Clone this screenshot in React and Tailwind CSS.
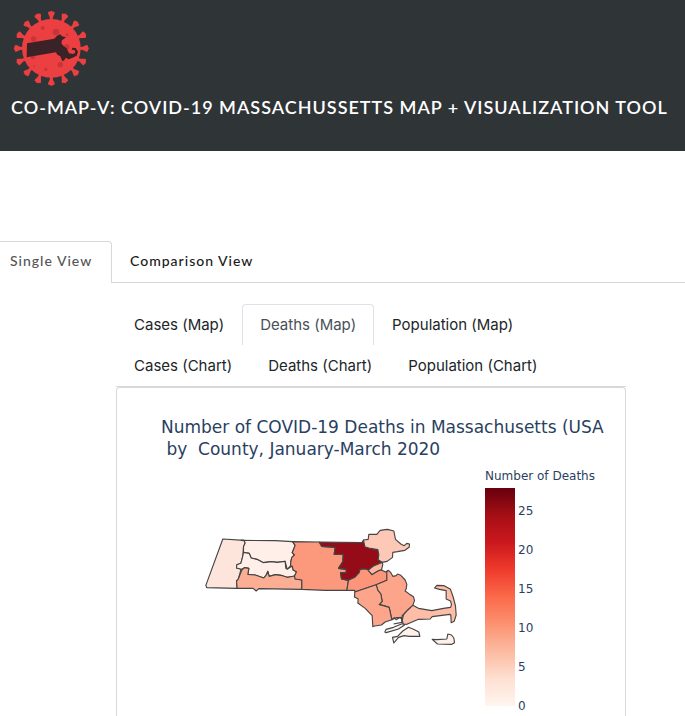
const spikeAngles = Array.from({ length: 16 }, (_, i) => i * 22.5);

function VirusLogo() {
  return (
    <svg viewBox="36 30 234 234" className="size-[78px]" role="img" aria-label="CO-MAP-V logo">
      <g fill="#ec3f41">
        {spikeAngles.map((angle) => (
          <path
            key={angle}
            transform={`rotate(${angle} 154 145)`}
            d="M150 60 L149 51 L144 40 Q143 34 149 35 L154 32 L159 35 Q165 34 164 40 L159 51 L158 60 Z"
          />
        ))}
        <circle cx="154" cy="145" r="88" />
      </g>
      <g fill="#c73538">
        <circle cx="128" cy="84" r="6" />
        <circle cx="168" cy="96" r="10" />
        <circle cx="201" cy="104" r="4" />
        <circle cx="101" cy="117" r="8" />
        <circle cx="200" cy="141" r="8" />
        <circle cx="99" cy="171" r="7" />
        <circle cx="181" cy="194" r="8" />
        <circle cx="137" cy="208" r="5" />
        <circle cx="102" cy="199" r="3" />
      </g>
      <path
        fill="#3a2226"
        d="M81 130 L163 116 L171 107 L181 103 L186 109 L198 112 L186 121 L184 130 L190 137 L200 145 L207 160 L219 162 L226 158 L225 151 L215 149 L217 143 L227 144 L234 155 L230 167 L218 173 L206 178 L197 173 L193 181 L187 184 L181 169 L172 164 L168 157 L80 172 Z"
      />
    </svg>
  );
}

const westernCounties = [
  { name: "Berkshire", fill: "#fee5dc", d: "83,57 147,61 150,69 145,80 144,97 142,112 137,130 125,134 124,144 138,147 129,178 124,183 126,205 35,203 32,196" },
  { name: "Franklin", fill: "#ffefe8", d: "138,61 240,62 292,65 300,76 296,86 291,98 298,105 290,112 287,125 286,138 276,148 270,124 246,127 228,125 205,128 188,119 168,114 162,100 145,97 145,80 150,69 147,62" },
  { name: "Hampshire", fill: "#ffefe8", d: "145,97 162,100 168,114 188,119 205,128 228,125 246,127 270,124 272,145 276,148 291,138 294,150 304,155 301,163 295,170 276,172 262,167 241,164 222,169 218,154 214,164 206,174 180,165 158,163 161,145 148,143 140,148 124,144 125,134 137,130 142,112" },
  { name: "Hampden", fill: "#fcae94", d: "148,143 161,145 158,163 180,165 206,174 214,164 218,154 222,169 241,164 262,167 276,172 298,168 300,177 320,180 320,208 191,206 183,213 174,205 126,205 124,183 129,178 140,150" },
  { name: "Worcester", fill: "#fc997d", d: "292,65 372,66 380,79 420,82 417,103 444,103 443,125 430,145 453,148 453,158 436,158 439,177 460,181 455,211 391,211 320,208 320,180 300,177 298,168 304,155 294,150 291,138 286,138 287,125 290,112 298,105 291,98 296,86 300,76" },
];

const easternCounties = [
  { name: "Middlesex", fill: "#960b18", d: "27,66 155,68 160,60 164,80 176,84 203,89 206,104 204,119 216,127 205,132 190,138 180,146 174,150 165,147 150,148 147,158 134,172 115,181 94,177 91,158 108,158 108,148 85,145 98,125 99,103 72,103 75,82 35,79" },
  { name: "Essex", fill: "#fdc9b6", d: "160,60 174,58 176,43 200,43 210,31 232,28 251,33 256,58 272,72 282,77 290,70 298,72 297,82 284,91 262,95 248,97 247,112 235,121 231,124 216,127 204,119 206,104 203,89 176,84 164,80" },
  { name: "Suffolk", fill: "#fcb79e", d: "216,127 218,133 214,150 205,152 185,164 177,155 174,150 180,146 190,138 205,132" },
  { name: "Norfolk", fill: "#fc9579", d: "115,181 134,172 147,158 150,148 165,147 174,150 177,155 185,164 205,152 214,150 226,156 232,152 230,181 198,194 134,216 134,211 110,211" },
  { name: "Plymouth", fill: "#fca58b", d: "230,155 235,151 242,158 248,169 258,167 262,162 272,166 285,180 290,193 288,206 285,213 296,221 310,230 313,242 308,256 293,270 276,287 276,300 270,292 258,299 252,293 245,299 237,262 220,257 207,254 216,244 212,222 203,211 198,194 230,181" },
  { name: "Bristol", fill: "#fca58b", d: "134,216 198,194 203,211 212,222 216,244 207,254 220,257 237,262 245,299 225,306 214,315 193,318 188,320 186,287 165,265 143,249 144,237 133,231" },
  { name: "Barnstable", fill: "#fdbda6", d: "308,256 325,265 365,272 400,265 421,262 424,254 421,243 408,237 408,212 388,208 373,204 380,196 402,197 421,208 429,231 436,258 438,285 432,304 423,308 422,285 419,283 366,290 360,297 325,298 290,313 279,312 276,300 280,285 293,270" },
  { name: "Elizabeth Islands", fill: "#fff5f0", d: "224,336 228,328 250,322 276,311 284,314 265,327 228,338" },
  { name: "Dukes", fill: "#fff1ea", d: "247,352 262,349 278,333 295,322 310,328 326,336 329,349 297,349 282,347 265,352 251,369" },
  { name: "Nantucket", fill: "#fff1ea", d: "366,358 380,359 410,357 413,342 424,345 431,354 433,368 425,373 382,372" },
];

function County({ county }) {
  return (
    <polygon points={county.d} fill={county.fill}>
      <title>{county.name}</title>
    </polygon>
  );
}

function CountyMap() {
  return (
    <svg viewBox="30 24 758 354" className="h-[118px] w-[253px] shrink-0" role="img" aria-label="Deaths by county">
      <g stroke="#444" strokeWidth="3.4" strokeLinejoin="round">
        {westernCounties.map((c) => <County key={c.name} county={c} />)}
        <g transform="translate(345 0)">
          {easternCounties.map((c) => <County key={c.name} county={c} />)}
          <path fill="none" d="M245 299 L258 293 L274 293 L275 307 L250 312" />
        </g>
      </g>
    </svg>
  );
}

function Legend() {
  return (
    <div className="shrink-0 text-[12px] leading-[14px]">
      <p>Number of Deaths</p>
      <div className="mt-[5px] flex gap-[3px]">
        <div className="h-[218px] w-[30px] bg-[linear-gradient(to_top,#fff5f0_0%,#fee0d2_12.5%,#fcbba1_25%,#fc9272_37.5%,#fb6a4a_50%,#ef3b2c_62.5%,#cb181d_75%,#a50f15_87.5%,#67000d_100%)]" />
        <div className="mt-4 flex h-[209px] flex-col justify-between">
          {[25, 20, 15, 10, 5, 0].map((n) => <span key={n}>{n}</span>)}
        </div>
      </div>
    </div>
  );
}

function ChartTab({ label, active }) {
  return (
    <button
      type="button"
      role="tab"
      aria-selected={!!active}
      className={
        active
          ? "h-[41px] rounded-t border border-b-0 border-[#dee2e6] px-[17px] text-[#495057]"
          : "h-[41px] border border-b-0 border-transparent px-[17px] text-[#212529]"
      }
    >
      {label}
    </button>
  );
}

export default function App() {
  return (
    <div className="flex h-screen flex-col overflow-hidden bg-white">
      <header className="h-[151px] shrink-0 bg-[#2f3437] pt-[10px]">
        <div className="pl-3"><VirusLogo /></div>
        <h1 className="mt-[5px] pl-[11px] font-[Lato,sans-serif] text-[18px] leading-7 font-semibold tracking-[1px] whitespace-nowrap text-white">
          CO-MAP-V: COVID-19 MASSACHUSSETTS MAP + VISUALIZATION TOOL
        </h1>
      </header>
      <main className="flex flex-1 flex-col pt-[90px]">
        <div role="tablist" className="flex h-[42px] shrink-0 border-b border-[#d8d8d8] font-[Lato,sans-serif] text-[14px] font-medium tracking-[1px]">
          <button type="button" role="tab" aria-selected="true" className="-mb-px w-28 rounded-tr border-t border-r border-[#d8d8d8] bg-white pb-1 pl-[10px] text-left text-[#555]">
            Single View
          </button>
          <button type="button" role="tab" aria-selected="false" className="px-[18px] pb-[2px] text-[#1a1a1a]">
            Comparison View
          </button>
        </div>
        <section className="mt-[21px] mr-[59px] ml-[116px] flex flex-1 flex-col">
          <div role="tablist" className="border-b border-[#d8d8d8] font-[Inter,sans-serif] text-[15px]">
            <div className="flex">
              <ChartTab label="Cases (Map)" />
              <ChartTab label="Deaths (Map)" active />
              <ChartTab label="Population (Map)" />
            </div>
            <div className="flex">
              <ChartTab label="Cases (Chart)" />
              <ChartTab label="Deaths (Chart)" />
              <ChartTab label="Population (Chart)" />
            </div>
          </div>
          <div className="flex-1 rounded-t border border-b-0 border-[#d8d8d8] px-5 pt-7">
            <div className="pl-6 font-['DejaVu_Sans',Verdana,sans-serif] text-[#2a3f5f]">
              <h2 className="text-[17px] leading-[22px] whitespace-pre">
                {"Number of COVID-19 Deaths in Massachusetts (USA\n by  County, January-March 2020"}
              </h2>
              <div className="mt-[9px] flex gap-[27px] pl-11">
                <div className="pt-[59px]"><CountyMap /></div>
                <Legend />
              </div>
            </div>
          </div>
        </section>
      </main>
    </div>
  );
}
